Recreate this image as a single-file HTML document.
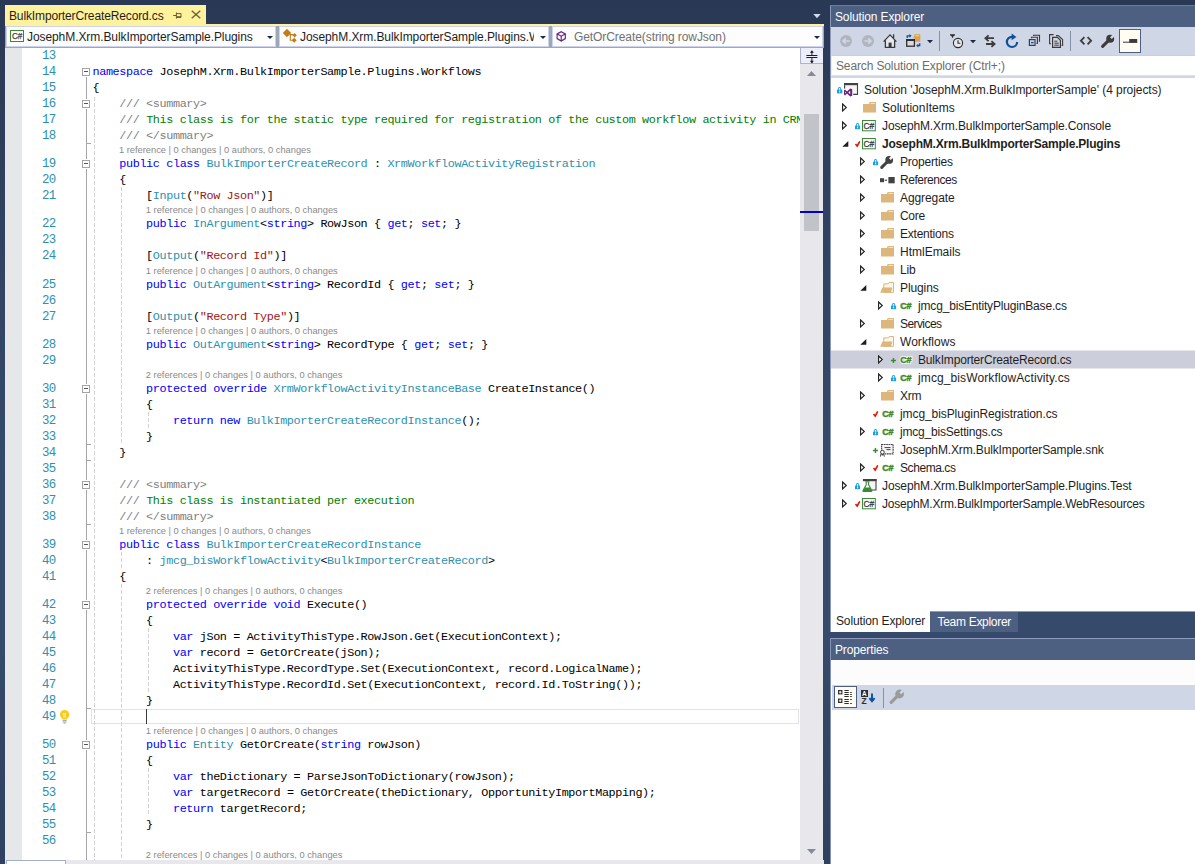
<!DOCTYPE html>
<html lang="en">
<head>
<meta charset="utf-8">
<title>BulkImporterCreateRecord.cs</title>
<style>
*{box-sizing:border-box;margin:0;padding:0}
html,body{width:1195px;height:864px;overflow:hidden}
body{background:linear-gradient(to bottom,#293955 0px,#2d3d5a 102px,#324565 302px,#364a6b 502px,#364a6c 640px,#344767 702px,#2f4060 864px);position:relative;font-family:"Liberation Sans",sans-serif;font-size:12px;color:#1e1e1e;letter-spacing:-0.13px}
.abs{position:absolute}
/* ---- document tab ---- */
#tab{position:absolute;left:5px;top:5px;width:201px;height:21px;background:#fff29d}
#tab .t{position:absolute;left:4px;top:4px;line-height:14px;color:#1e1e1e;white-space:nowrap}
#tabline{position:absolute;left:5px;top:24px;width:819px;height:2px;background:#fff29d}
#tabdd{position:absolute;left:813px;top:14px}
/* ---- nav bar ---- */
#nav{position:absolute;left:5px;top:26px;width:819px;height:22px;background:#9ba7bb}
.cb{position:absolute;top:0;height:21px;background:#fdfdfd;border:1px solid #ccd3ea;white-space:nowrap;overflow:hidden}
.cb .t{position:absolute;top:3px;line-height:14px;letter-spacing:-0.08px}
.cb svg{position:absolute}
.cb .dd{position:absolute;right:2px;top:9px;width:0;height:0;border:3px solid transparent;border-top:3.2px solid #1b2a47;border-bottom:0}
#lb{position:absolute;left:5px;top:48px;width:1px;height:812px;background:#8e9bbc}
/* ---- editor ---- */
#ed{position:absolute;left:5px;top:48px;width:795px;height:812px;background:#fff;overflow:hidden}
#mg{position:absolute;left:0;top:0;width:17px;height:812px;background:#e6e7e8}
.ln,.cd{position:absolute;font-family:"Liberation Mono",monospace;font-size:11.8px;letter-spacing:-0.377px;line-height:16px;height:16px;white-space:pre;margin-top:1px}
.ln{left:19.5px;width:31px;text-align:right;color:#2b91af;font-size:12.4px;letter-spacing:-0.74px}
.cd{left:87.5px;color:#000}
.k{color:#0000ff}.ty{color:#2b91af}.s{color:#a31515}.c{color:#008000}.g{color:#808080}.p{color:#000}
.cl{position:absolute;font-size:9.3px;line-height:12px;height:12px;margin-top:1px;color:#8a8a8a;white-space:pre;letter-spacing:0}
.ob{position:absolute;left:77px;width:8px;height:8px;border:1px solid #a5a5a5;background:#fff;z-index:2}
.ob i{position:absolute;left:1px;top:2px;width:4px;height:1px;background:#555}
.vl{position:absolute;width:1px;background:#a5a5a5}
.tk{position:absolute;left:81px;width:5px;height:1px;background:#a5a5a5}
.ig{position:absolute;width:1px;background:repeating-linear-gradient(to bottom,#d2d2d2 0,#d2d2d2 4px,transparent 4px,transparent 6px)}
#curline{position:absolute;left:86px;top:661px;width:708px;height:15px;border:1px solid #e2e2ee}
#caret{position:absolute;left:140.5px;top:661px;width:1.5px;height:14.5px;background:#3a3a3a}
/* ---- v scrollbar ---- */
#vs{position:absolute;left:800px;top:48px;width:23.2px;height:812px;background:#e8e8ec}
#split{position:absolute;left:0;top:0;width:23.2px;height:16px;background:#eceffb;border:1px solid #aab4cc;border-top:0;border-right:0}
#thumb{position:absolute;left:4px;top:66px;width:15px;height:117px;background:#c2c3c9}
#mark{position:absolute;left:0;top:163px;width:23.2px;height:2px;background:#0000cd}
#hs{position:absolute;left:5px;top:860px;width:819px;height:5px;background:#e8e8ec}
#zoom{position:absolute;left:1px;top:0;width:60px;height:4px;background:#fff;border:1px solid #a3aecb;border-bottom:0}
/* ---- right panels ---- */
#sebd{position:absolute;left:830px;top:5px;width:1px;height:627px;background:#8b98b9}
#prbd{position:absolute;left:830px;top:638px;width:1px;height:226px;background:#8492b4}
#setop{position:absolute;left:830px;top:5px;width:365px;height:1px;background:#6b7ca1}
#se .ttl{border-top:0}
#se .ttl span{top:3px}
#se{position:absolute;left:831px;top:6px;width:364px;height:606px;background:#fff}
.ttl{position:absolute;left:0;top:0;width:364px;height:21px;background:#4d6082;color:#fff;border-top:1px solid #8e9bbc}
.ttl span{position:absolute;left:4px;top:2px;line-height:16px;white-space:nowrap}
#tb{position:absolute;left:0;top:21px;width:364px;height:29px;background:#cfd6e5}
#tb svg,#ptb svg{position:absolute;left:0;top:0}
#srch{position:absolute;left:0;top:49px;width:364px;height:21px;background:#fff;border:1px solid #dde2ee;border-top-color:#c9cfdf;border-left-color:#e9ecf4;border-right:0}
#srch span{position:absolute;left:4px;top:2px;line-height:16px;color:#6d6d6d;white-space:nowrap}
#gap{position:absolute;left:0;top:70px;width:364px;height:2px;background:#cfd6e5}
#tree{position:absolute;left:0;top:72px;width:364px;height:533px;background:#fff}
.row{position:absolute;left:0;width:364px;height:18px}
.row .sel{position:absolute;left:0;top:0;width:364px;height:19px;background:linear-gradient(to bottom,#e5e6ed 0,#e5e6ed 1px,#cccedb 1px,#cccedb 18px,#e5e6ed 18px)}
.row svg{position:absolute;overflow:visible}
.row .tx{position:absolute;top:2px;line-height:16px;white-space:nowrap}
.row .b{font-weight:bold}
#tabs{position:absolute;left:831px;top:611px;width:364px;height:21px}
#tabs .ln1{position:absolute;left:99px;top:0;width:265px;height:1px;background:#8e9bbc}
#tabs .a{position:absolute;left:0;top:0;width:99px;height:21px;background:#fff;color:#1e1e1e}
#tabs .i{position:absolute;left:99px;top:1px;width:88px;height:20px;background:#4d6082;color:#fff}
#tabs span{position:absolute;left:5px;top:2px;line-height:16px;white-space:nowrap}
#pr{position:absolute;left:831px;top:638px;width:364px;height:226px;background:#fff}
#pr .w{position:absolute;left:0;top:22px;width:364px;height:25px;background:#fcfcfc}
#pr .ttl{height:22px}
#pr .ttl span{top:3px}
#tabs .i span{left:7.5px;letter-spacing:-0.3px}
#ptb{position:absolute;left:1px;top:47px;width:363px;height:25px;background:#cfd6e5}
</style>
</head>
<body>

<!-- document tab well -->
<div id="tab"><span class="t">BulkImporterCreateRecord.cs</span>
<svg class="abs" style="left:168px;top:7px" width="9" height="8" viewBox="0 0 9 8"><path d="M0.2 3.5 H3.2 M3.4 0.4 V6.6 M3.4 1.6 H8 V5.4 H3.4" fill="none" stroke="#6b5c33" stroke-width="1"/><path d="M3.4 4.9 H8" stroke="#6b5c33" stroke-width="1.4"/></svg>
<svg class="abs" style="left:186px;top:5px" width="10" height="9" viewBox="0 0 10 9"><path d="M0.7 0.7 L9.3 8.3 M9.3 0.7 L0.7 8.3" stroke="#6b5c33" stroke-width="1.25" fill="none"/></svg>
</div>
<div id="tabline"></div>
<svg id="tabdd" width="8" height="5" viewBox="0 0 8 5"><path d="M0.3 0 H7.7 L4 4.2 Z" fill="#d3dbec"/></svg>

<!-- navigation bar -->
<div id="nav">
  <div class="cb" style="left:1px;width:270px">
    <svg style="left:3px;top:3px" width="15" height="13" viewBox="0 0 15 13"><rect x="0.5" y="0.5" width="13" height="11" fill="#fff" stroke="#388a34"/><text x="1.9" y="9" font-family="Liberation Sans, sans-serif" font-size="8.2" fill="#424242" stroke="#424242" stroke-width="0.25" letter-spacing="-0.1">C#</text></svg>
    <span class="t" style="left:20px">JosephM.Xrm.BulkImporterSample.Plugins</span><span class="dd"></span>
  </div>
  <div class="cb" style="left:274px;width:270px">
    <svg style="left:2px;top:1px" width="15" height="15" viewBox="282 28 15 15"><path d="M287 28.8 L291.2 33 L287 37.2 L282.8 33 Z M294.6 33 L296.8 35.2 L294.6 37.4 L292.4 35.2 Z M294.2 37.8 L296.7 40.3 L294.2 42.8 L291.7 40.3 Z" fill="#c27d1a"/><path d="M289.5 34.6 H293 M290.3 34.6 V40.3 H292.5" fill="none" stroke="#c27d1a" stroke-width="1.1"/></svg>
    <span class="t" style="left:20px">JosephM.Xrm.BulkImporterSample.Plugins.Workflows</span>
    <span class="abs" style="right:0;top:0;width:14px;height:19px;background:#fdfdfd"></span><span class="dd"></span>
  </div>
  <div class="cb" style="left:547px;width:271px">
    <svg style="left:3px;top:4px" width="11" height="11" viewBox="0 0 11 11"><path d="M5.2 0.7 L9.3 2.9 V7.6 L5.2 10 L1.1 7.6 V2.9 Z M1.3 3 L5.2 5.2 L9.1 3 M5.2 5.2 V10" fill="none" stroke="#68217a" stroke-width="1.15"/></svg>
    <span class="t" style="left:21px;color:#717171">GetOrCreate(string rowJson)</span><span class="dd"></span>
  </div>
</div>
<div id="lb"></div>

<!-- code editor -->
<div id="ed">
<div id="mg"></div>
<div id="curline"></div>
<div class="ob" style="top:20px"><i></i></div>
<div class="ob" style="top:52px"><i></i></div>
<div class="ob" style="top:112px"><i></i></div>
<div class="ob" style="top:337px"><i></i></div>
<div class="ob" style="top:433px"><i></i></div>
<div class="ob" style="top:493px"><i></i></div>
<div class="ob" style="top:553px"><i></i></div>
<div class="ob" style="top:693px"><i></i></div>
<div class="vl" style="left:81px;top:29px;height:22px"></div>
<div class="vl" style="left:81px;top:61px;height:50px"></div>
<div class="tk" style="top:95px"></div>
<div class="vl" style="left:81px;top:121px;height:215px"></div>
<div class="vl" style="left:81px;top:346px;height:86px"></div>
<div class="tk" style="top:396px"></div>
<div class="tk" style="top:412px"></div>
<div class="vl" style="left:81px;top:442px;height:50px"></div>
<div class="tk" style="top:476px"></div>
<div class="vl" style="left:81px;top:502px;height:50px"></div>
<div class="vl" style="left:81px;top:562px;height:130px"></div>
<div class="tk" style="top:660px"></div>
<div class="vl" style="left:81px;top:702px;height:110px"></div>
<div class="tk" style="top:784px"></div>
<div class="ig" style="left:89px;top:49px;height:763px"></div>
<div class="ig" style="left:116px;top:139px;height:257px"></div>
<div class="ig" style="left:116px;top:504px;height:16px"></div>
<div class="ig" style="left:116px;top:536px;height:276px"></div>
<div class="ig" style="left:143px;top:364px;height:16px"></div>
<div class="ig" style="left:143px;top:580px;height:64px"></div>
<div class="ig" style="left:143px;top:720px;height:48px"></div>
<div class="ln" style="top:-1px">13</div>
<div class="ln" style="top:15px">14</div>
<div class="cd" style="top:15px"><span class="k">namespace</span><span class="p"> JosephM.Xrm.BulkImporterSample.Plugins.Workflows</span></div>
<div class="ln" style="top:31px">15</div>
<div class="cd" style="top:31px"><span class="p">{</span></div>
<div class="ln" style="top:47px">16</div>
<div class="cd" style="top:47px"><span class="g">    /// &lt;summary&gt;</span></div>
<div class="ln" style="top:63px">17</div>
<div class="cd" style="top:63px"><span class="g">    /// </span><span class="c">This class is for the static type required for registration of the custom workflow activity in CRM</span></div>
<div class="ln" style="top:79px">18</div>
<div class="cd" style="top:79px"><span class="g">    /// &lt;/summary&gt;</span></div>
<div class="cl" style="top:95px;left:114.0px">1 reference | 0 changes | 0 authors, 0 changes</div>
<div class="ln" style="top:107px">19</div>
<div class="cd" style="top:107px"><span class="k">    public class </span><span class="ty">BulkImporterCreateRecord</span><span class="p"> : </span><span class="ty">XrmWorkflowActivityRegistration</span></div>
<div class="ln" style="top:123px">20</div>
<div class="cd" style="top:123px"><span class="p">    {</span></div>
<div class="ln" style="top:139px">21</div>
<div class="cd" style="top:139px"><span class="p">        [</span><span class="ty">Input</span><span class="p">(</span><span class="s">&quot;Row Json&quot;</span><span class="p">)]</span></div>
<div class="cl" style="top:155px;left:140.8px">1 reference | 0 changes | 0 authors, 0 changes</div>
<div class="ln" style="top:167px">22</div>
<div class="cd" style="top:167px"><span class="k">        public </span><span class="ty">InArgument</span><span class="p">&lt;</span><span class="k">string</span><span class="p">&gt; RowJson { </span><span class="k">get</span><span class="p">; </span><span class="k">set</span><span class="p">; }</span></div>
<div class="ln" style="top:183px">23</div>
<div class="ln" style="top:199px">24</div>
<div class="cd" style="top:199px"><span class="p">        [</span><span class="ty">Output</span><span class="p">(</span><span class="s">&quot;Record Id&quot;</span><span class="p">)]</span></div>
<div class="cl" style="top:216px;left:140.8px">1 reference | 0 changes | 0 authors, 0 changes</div>
<div class="ln" style="top:228px">25</div>
<div class="cd" style="top:228px"><span class="k">        public </span><span class="ty">OutArgument</span><span class="p">&lt;</span><span class="k">string</span><span class="p">&gt; RecordId { </span><span class="k">get</span><span class="p">; </span><span class="k">set</span><span class="p">; }</span></div>
<div class="ln" style="top:244px">26</div>
<div class="ln" style="top:260px">27</div>
<div class="cd" style="top:260px"><span class="p">        [</span><span class="ty">Output</span><span class="p">(</span><span class="s">&quot;Record Type&quot;</span><span class="p">)]</span></div>
<div class="cl" style="top:276px;left:140.8px">1 reference | 0 changes | 0 authors, 0 changes</div>
<div class="ln" style="top:288px">28</div>
<div class="cd" style="top:288px"><span class="k">        public </span><span class="ty">OutArgument</span><span class="p">&lt;</span><span class="k">string</span><span class="p">&gt; RecordType { </span><span class="k">get</span><span class="p">; </span><span class="k">set</span><span class="p">; }</span></div>
<div class="ln" style="top:304px">29</div>
<div class="cl" style="top:320px;left:140.8px">2 references | 0 changes | 0 authors, 0 changes</div>
<div class="ln" style="top:332px">30</div>
<div class="cd" style="top:332px"><span class="k">        protected override </span><span class="ty">XrmWorkflowActivityInstanceBase</span><span class="p"> CreateInstance()</span></div>
<div class="ln" style="top:348px">31</div>
<div class="cd" style="top:348px"><span class="p">        {</span></div>
<div class="ln" style="top:364px">32</div>
<div class="cd" style="top:364px"><span class="k">            return new </span><span class="ty">BulkImporterCreateRecordInstance</span><span class="p">();</span></div>
<div class="ln" style="top:380px">33</div>
<div class="cd" style="top:380px"><span class="p">        }</span></div>
<div class="ln" style="top:396px">34</div>
<div class="cd" style="top:396px"><span class="p">    }</span></div>
<div class="ln" style="top:412px">35</div>
<div class="ln" style="top:428px">36</div>
<div class="cd" style="top:428px"><span class="g">    /// &lt;summary&gt;</span></div>
<div class="ln" style="top:444px">37</div>
<div class="cd" style="top:444px"><span class="g">    /// </span><span class="c">This class is instantiated per execution</span></div>
<div class="ln" style="top:460px">38</div>
<div class="cd" style="top:460px"><span class="g">    /// &lt;/summary&gt;</span></div>
<div class="cl" style="top:476px;left:114.0px">1 reference | 0 changes | 0 authors, 0 changes</div>
<div class="ln" style="top:488px">39</div>
<div class="cd" style="top:488px"><span class="k">    public class </span><span class="ty">BulkImporterCreateRecordInstance</span></div>
<div class="ln" style="top:504px">40</div>
<div class="cd" style="top:504px"><span class="p">        : </span><span class="ty">jmcg_bisWorkflowActivity</span><span class="p">&lt;</span><span class="ty">BulkImporterCreateRecord</span><span class="p">&gt;</span></div>
<div class="ln" style="top:520px">41</div>
<div class="cd" style="top:520px"><span class="p">    {</span></div>
<div class="cl" style="top:536px;left:140.8px">2 references | 0 changes | 0 authors, 0 changes</div>
<div class="ln" style="top:548px">42</div>
<div class="cd" style="top:548px"><span class="k">        protected override void</span><span class="p"> Execute()</span></div>
<div class="ln" style="top:564px">43</div>
<div class="cd" style="top:564px"><span class="p">        {</span></div>
<div class="ln" style="top:580px">44</div>
<div class="cd" style="top:580px"><span class="k">            var</span><span class="p"> jSon = ActivityThisType.RowJson.Get(ExecutionContext);</span></div>
<div class="ln" style="top:596px">45</div>
<div class="cd" style="top:596px"><span class="k">            var</span><span class="p"> record = GetOrCreate(jSon);</span></div>
<div class="ln" style="top:612px">46</div>
<div class="cd" style="top:612px"><span class="p">            ActivityThisType.RecordType.Set(ExecutionContext, record.LogicalName);</span></div>
<div class="ln" style="top:628px">47</div>
<div class="cd" style="top:628px"><span class="p">            ActivityThisType.RecordId.Set(ExecutionContext, record.Id.ToString());</span></div>
<div class="ln" style="top:644px">48</div>
<div class="cd" style="top:644px"><span class="p">        }</span></div>
<div class="ln" style="top:660px">49</div>
<div class="cl" style="top:676px;left:140.8px">1 reference | 0 changes | 0 authors, 0 changes</div>
<div class="ln" style="top:688px">50</div>
<div class="cd" style="top:688px"><span class="k">        public </span><span class="ty">Entity</span><span class="p"> GetOrCreate(</span><span class="k">string</span><span class="p"> rowJson)</span></div>
<div class="ln" style="top:704px">51</div>
<div class="cd" style="top:704px"><span class="p">        {</span></div>
<div class="ln" style="top:720px">52</div>
<div class="cd" style="top:720px"><span class="k">            var</span><span class="p"> theDictionary = ParseJsonToDictionary(rowJson);</span></div>
<div class="ln" style="top:736px">53</div>
<div class="cd" style="top:736px"><span class="k">            var</span><span class="p"> targetRecord = GetOrCreate(theDictionary, OpportunityImportMapping);</span></div>
<div class="ln" style="top:752px">54</div>
<div class="cd" style="top:752px"><span class="k">            return</span><span class="p"> targetRecord;</span></div>
<div class="ln" style="top:768px">55</div>
<div class="cd" style="top:768px"><span class="p">        }</span></div>
<div class="ln" style="top:784px">56</div>
<div class="cl" style="top:800px;left:140.8px">2 references | 0 changes | 0 authors, 0 changes</div>
<div id="caret"></div>
<svg class="abs" style="left:55px;top:662px" width="10" height="14" viewBox="0 0 10 14"><path d="M4.6 0 a4.5 4.5 0 0 1 2.6 8.2 L6.8 9.4 H2.4 L2 8.2 A4.5 4.5 0 0 1 4.6 0 Z" fill="#fccb1a"/><path d="M3 3.6 H6.2 M3.9 3.6 V7.6 M5.3 3.6 V7.6" stroke="#fff" stroke-width="0.8" fill="none"/><path d="M2.6 10.6 H6.6 M2.6 12 H6.6 M3.8 13.2 H5.4" stroke="#9a9a9a" stroke-width="0.9"/></svg>
</div>

<!-- vertical scrollbar -->
<div id="vs">
  <div id="split"><svg class="abs" style="left:5px;top:2px" width="12" height="14" viewBox="0 0 12 14"><path d="M0.4 5.5 H11.4 M0.4 7.5 H11.4 M5.9 1 V5 M5.9 8 V12.6" stroke="#1e1e1e" stroke-width="1" fill="none"/><path d="M3.9 2.8 L5.9 0.2 L7.9 2.8 Z M3.9 10.8 L5.9 13.4 L7.9 10.8 Z" fill="#1e1e1e"/></svg></div>
  <svg class="abs" style="left:7px;top:23px" width="9" height="5" viewBox="0 0 9 5"><path d="M4.5 0 L9 5 H0 Z" fill="#868999"/></svg>
  <div id="thumb"></div>
  <div id="mark"></div>
  <svg class="abs" style="left:7px;top:801px" width="9" height="5" viewBox="0 0 9 5"><path d="M4.5 5 L9 0 H0 Z" fill="#868999"/></svg>
</div>
<div id="hs"><div id="zoom"></div></div>

<!-- Solution Explorer -->
<div id="sebd"></div><div id="prbd"></div>
<div id="setop"></div>
<div id="se">
  <div class="ttl"><span>Solution Explorer</span></div>
  <div id="tb">
<svg width="364" height="29" viewBox="831 27 364 29">
<!-- back / forward (disabled) -->
<circle cx="846" cy="41" r="6" fill="#b1b5c0"/>
<path d="M849.6 41 H843.4 M845.8 38.3 L843 41 L845.8 43.7" fill="none" stroke="#cfd6e5" stroke-width="1.7"/>
<circle cx="868" cy="41" r="6" fill="#b1b5c0"/>
<path d="M864.4 41 H870.6 M868.2 38.3 L871 41 L868.2 43.7" fill="none" stroke="#cfd6e5" stroke-width="1.7"/>
<!-- home -->
<path d="M885.4 40.6 V47.4 H894.6 V40.6 L890 35.6 Z" fill="#e6e8f0"/>
<path d="M883.6 41.6 L890 34.9 L896.4 41.6 M885.4 40.4 V47.4 H894.6 V40.4 M893.6 34.2 V38" fill="none" stroke="#3b3b3b" stroke-width="1.3"/>
<rect x="888.6" y="42.6" width="3" height="4.8" fill="#3b3b3b"/>
<!-- sync with active document -->
<path d="M911.4 37.8 H913.6 L914.6 34.3 H920.3 V41.8 H914.8 V38.5 Z" fill="#dba24a"/>
<rect x="915.6" y="35.3" width="3.4" height="1" fill="#f0d9b0"/>
<rect x="906.7" y="39.7" width="7.7" height="6.5" fill="#d8dae6" stroke="#2d2d2d" stroke-width="1.3"/>
<rect x="906.1" y="39" width="8.9" height="2" fill="#2d2d2d"/>
<path d="M907.2 38 V35.8 H910.2" fill="none" stroke="#0e4f9e" stroke-width="1.3"/><path d="M909.4 33.9 L911.6 35.8 L909.4 37.7 Z" fill="#0e4f9e"/>
<path d="M919.7 43.2 V45.6 H917.6" fill="none" stroke="#0e4f9e" stroke-width="1.3"/><path d="M918.4 43.7 L916.2 45.6 L918.4 47.5 Z" fill="#0e4f9e"/>
<path d="M927 40 H933 L930 43.3 Z" fill="#1e2a44"/>
<rect x="939" y="31" width="1" height="20" fill="#8591a7"/>
<!-- pending changes filter -->
<path d="M950 34.2 H955 V35.2 L953.1 36.4 V37.8 H951.9 V36.4 L950 35.2 Z" fill="#2d2d2d"/>
<circle cx="958" cy="43" r="4.6" fill="#e6e8f0" stroke="#2d2d2d" stroke-width="1.1"/>
<path d="M958 40.3 V43.3 H960.4" fill="none" stroke="#2d2d2d" stroke-width="1.1"/>
<path d="M970 40 H976 L973 43.3 Z" fill="#1e2a44"/>
<!-- sync arrows -->
<path d="M994 38.2 H986 M988.6 35.3 L985.4 38.2 L988.6 41.1 M986 44 H994 M991.4 41.1 L994.6 44 L991.4 46.9" fill="none" stroke="#3b3b3b" stroke-width="1.8"/>
<!-- refresh -->
<path d="M1017.1 41.9 A5.1 5.1 0 1 1 1012 36.8" fill="none" stroke="#0e4f9e" stroke-width="2.2"/>
<path d="M1011.6 33.6 L1016.4 36.9 L1011.6 40.2 Z" fill="#0e4f9e"/>
<!-- collapse all -->
<rect x="1029.4" y="39.6" width="5.6" height="5.8" fill="none" stroke="#3b3b3b" stroke-width="1.2"/>
<path d="M1031 42.6 H1033.6" stroke="#0e4f9e" stroke-width="1.4"/>
<path d="M1031.5 38.2 V37.3 H1037.4 V43.4 H1036.5 M1033.6 35.9 V35.2 H1039.5 V41.2 H1038.8" fill="none" stroke="#3b3b3b" stroke-width="1.1"/>
<!-- show all files -->
<path d="M1053.6 34.6 H1049.6 V43.6 H1050.8 M1056 35.6 H1058.2 L1062.6 39.6 V45.4 H1061.6" fill="none" stroke="#3b3b3b" stroke-width="1.1"/>
<path d="M1052.6 37.4 H1057.4 L1060.4 40.2 V47.4 H1052.6 Z" fill="#cfd6e5" stroke="#3b3b3b" stroke-width="1.2"/>
<path d="M1054.4 41.2 H1057.4 M1054.4 43.2 H1058.8 M1054.4 45.2 H1058.8" stroke="#3b3b3b" stroke-width="1"/>
<rect x="1070" y="31" width="1" height="20" fill="#8591a7"/>
<!-- view code -->
<path d="M1084.4 37.1 L1080.9 40.7 L1084.4 44.3 M1087.6 37.1 L1091.1 40.7 L1087.6 44.3" fill="none" stroke="#3b3b3b" stroke-width="1.8"/>
<!-- properties wrench -->
<path d="M1102.6 46.4 L1108.4 40.6" stroke="#3b3b3b" stroke-width="3" stroke-linecap="round"/>
<circle cx="1110.2" cy="38.8" r="4" fill="#3b3b3b"/>
<path d="M1110.9 38.1 L1115.2 33.8" stroke="#cfd6e5" stroke-width="2.5"/>
<!-- preview selected items (pressed) -->
<rect x="1119.5" y="29.5" width="21" height="23" fill="#fffcf4" stroke="#4d6082"/>
<rect x="1123" y="41.7" width="14.2" height="1" fill="#3b3b3b"/>
<rect x="1129.2" y="39" width="8" height="3.7" fill="#3b3b3b"/>
</svg>

  </div>
  <div id="srch"><span>Search Solution Explorer (Ctrl+;)</span></div>
  <div id="gap"></div>
  <div id="tree">
<div class="row" style="top:2px"><svg style="left:5.9px;top:7.2px" width="6" height="7" viewBox="0 0 6 7"><path d="M0.85 2.9 V1.65 A1.7 1.65 0 0 1 4.25 1.65 V2.9 H3.3 V1.7 A0.75 0.75 0 0 0 1.8 1.7 V2.9 Z" fill="#1ba1e2"/><rect x="0" y="2.7" width="5.3" height="3.7" fill="#1ba1e2"/><rect x="2" y="3.7" width="1.2" height="1.6" fill="#fff"/></svg><svg style="left:13.0px;top:2.9px" width="15" height="14" viewBox="0 0 15 14"><path d="M0.6 0.6 H13.5 V11.4 H9.2" fill="#f5f5f5" stroke="#424242" stroke-width="1.1"/><rect x="0" y="0" width="14" height="2.2" fill="#424242"/><rect x="0" y="2.2" width="1.2" height="3.4" fill="#424242"/><path d="M0 7.4 L1 6.6 L3 8.6 L6.2 5.4 L8.2 6.2 V12.8 L6.2 13.6 L3 10.4 L1 12.4 L0 11.6 Z M6.2 7.8 L4.4 9.5 L6.2 11.2 Z M1 8.6 V10.4 L2 9.5 Z" fill="#68217a" fill-rule="evenodd"/></svg><span class="tx" style="left:33px;letter-spacing:-0.059px">Solution &#x27;JosephM.Xrm.BulkImporterSample&#x27; (4 projects)</span></div>
<div class="row" style="top:20px"><svg style="left:11.0px;top:5.3px" width="6" height="9" viewBox="0 0 6 9"><path d="M0.6 1.0 L4.3 4.5 L0.6 8.0 Z" fill="#fff" stroke="#1e1e1e" stroke-width="1.1" stroke-linejoin="miter"/></svg><svg style="left:32.0px;top:4.1px" width="13" height="11" viewBox="0 0 13 11"><path d="M0 1.9 H5.9 L6.7 0 H13 V10.6 H0 Z" fill="#dcb67a"/><rect x="7.4" y="0.9" width="4.8" height="0.9" fill="#f6ecd8"/></svg><span class="tx" style="left:51px;letter-spacing:0.007px">SolutionItems</span></div>
<div class="row" style="top:38px"><svg style="left:11.0px;top:5.3px" width="6" height="9" viewBox="0 0 6 9"><path d="M0.6 1.0 L4.3 4.5 L0.6 8.0 Z" fill="#fff" stroke="#1e1e1e" stroke-width="1.1" stroke-linejoin="miter"/></svg><svg style="left:23.9px;top:7.3px" width="6" height="7" viewBox="0 0 6 7"><path d="M0.85 2.9 V1.65 A1.7 1.65 0 0 1 4.25 1.65 V2.9 H3.3 V1.7 A0.75 0.75 0 0 0 1.8 1.7 V2.9 Z" fill="#1ba1e2"/><rect x="0" y="2.7" width="5.1" height="3.5" fill="#1ba1e2"/><rect x="2" y="3.6" width="1.1" height="1.6" fill="#fff"/></svg><svg style="left:31.1px;top:4.2px" width="14" height="12" viewBox="0 0 14 12"><rect x="0.5" y="0.5" width="12.8" height="10.3" fill="#fff" stroke="#388a34" stroke-width="1"/><text x="1.6" y="8.8" font-family="Liberation Sans, sans-serif" font-size="8.3" fill="#424242" stroke="#424242" stroke-width="0.3">C#</text></svg><span class="tx" style="left:51px;letter-spacing:-0.117px">JosephM.Xrm.BulkImporterSample.Console</span></div>
<div class="row" style="top:56px"><svg style="left:11.0px;top:7.1px" width="7" height="6" viewBox="0 0 7 6"><path d="M6.3 0 V5.8 H0.3 Z" fill="#1e1e1e"/></svg><svg style="left:24.2px;top:7.1px" width="6" height="6" viewBox="0 0 6 6"><path d="M0.5 3 L2.2 5 L4.8 0.4" fill="none" stroke="#e51400" stroke-width="1.6"/></svg><svg style="left:31.1px;top:4.2px" width="14" height="12" viewBox="0 0 14 12"><rect x="0.5" y="0.5" width="12.8" height="10.3" fill="#fff" stroke="#388a34" stroke-width="1"/><text x="1.6" y="8.8" font-family="Liberation Sans, sans-serif" font-size="8.3" fill="#424242" stroke="#424242" stroke-width="0.3">C#</text></svg><span class="tx b" style="left:51px;letter-spacing:-0.207px">JosephM.Xrm.BulkImporterSample.Plugins</span></div>
<div class="row" style="top:74px"><svg style="left:29.0px;top:5.3px" width="6" height="9" viewBox="0 0 6 9"><path d="M0.6 1.0 L4.3 4.5 L0.6 8.0 Z" fill="#fff" stroke="#1e1e1e" stroke-width="1.1" stroke-linejoin="miter"/></svg><svg style="left:41.9px;top:7.3px" width="6" height="7" viewBox="0 0 6 7"><path d="M0.85 2.9 V1.65 A1.7 1.65 0 0 1 4.25 1.65 V2.9 H3.3 V1.7 A0.75 0.75 0 0 0 1.8 1.7 V2.9 Z" fill="#1ba1e2"/><rect x="0" y="2.7" width="5.1" height="3.5" fill="#1ba1e2"/><rect x="2" y="3.6" width="1.1" height="1.6" fill="#fff"/></svg><svg style="left:48.9px;top:3.8px" width="14" height="14" viewBox="0 0 14 14"><path d="M1.7 11.4 L7.4 5.7" stroke="#424242" stroke-width="3" stroke-linecap="round"/><circle cx="9.2" cy="3.9" r="3.9" fill="#424242"/><path d="M9.9 3.2 L14 -0.9" stroke="#fff" stroke-width="2.4"/></svg><span class="tx" style="left:69px;letter-spacing:-0.200px">Properties</span></div>
<div class="row" style="top:92px"><svg style="left:29.0px;top:5.3px" width="6" height="9" viewBox="0 0 6 9"><path d="M0.6 1.0 L4.3 4.5 L0.6 8.0 Z" fill="#fff" stroke="#1e1e1e" stroke-width="1.1" stroke-linejoin="miter"/></svg><svg style="left:48.6px;top:6.6px" width="15" height="7" viewBox="0 0 15 7"><rect x="0" y="1.2" width="4" height="4" fill="#424242"/><rect x="4.6" y="2.7" width="2.4" height="1.1" fill="#424242"/><rect x="8.4" y="0" width="6.3" height="6.3" fill="#424242"/></svg><span class="tx" style="left:69px;letter-spacing:-0.458px">References</span></div>
<div class="row" style="top:110px"><svg style="left:29.0px;top:5.3px" width="6" height="9" viewBox="0 0 6 9"><path d="M0.6 1.0 L4.3 4.5 L0.6 8.0 Z" fill="#fff" stroke="#1e1e1e" stroke-width="1.1" stroke-linejoin="miter"/></svg><svg style="left:50.0px;top:4.1px" width="13" height="11" viewBox="0 0 13 11"><path d="M0 1.9 H5.9 L6.7 0 H13 V10.6 H0 Z" fill="#dcb67a"/><rect x="7.4" y="0.9" width="4.8" height="0.9" fill="#f6ecd8"/></svg><span class="tx" style="left:69px;letter-spacing:-0.088px">Aggregate</span></div>
<div class="row" style="top:128px"><svg style="left:29.0px;top:5.3px" width="6" height="9" viewBox="0 0 6 9"><path d="M0.6 1.0 L4.3 4.5 L0.6 8.0 Z" fill="#fff" stroke="#1e1e1e" stroke-width="1.1" stroke-linejoin="miter"/></svg><svg style="left:50.0px;top:4.1px" width="13" height="11" viewBox="0 0 13 11"><path d="M0 1.9 H5.9 L6.7 0 H13 V10.6 H0 Z" fill="#dcb67a"/><rect x="7.4" y="0.9" width="4.8" height="0.9" fill="#f6ecd8"/></svg><span class="tx" style="left:69px;letter-spacing:-0.304px">Core</span></div>
<div class="row" style="top:146px"><svg style="left:29.0px;top:5.3px" width="6" height="9" viewBox="0 0 6 9"><path d="M0.6 1.0 L4.3 4.5 L0.6 8.0 Z" fill="#fff" stroke="#1e1e1e" stroke-width="1.1" stroke-linejoin="miter"/></svg><svg style="left:50.0px;top:4.1px" width="13" height="11" viewBox="0 0 13 11"><path d="M0 1.9 H5.9 L6.7 0 H13 V10.6 H0 Z" fill="#dcb67a"/><rect x="7.4" y="0.9" width="4.8" height="0.9" fill="#f6ecd8"/></svg><span class="tx" style="left:69px;letter-spacing:-0.235px">Extentions</span></div>
<div class="row" style="top:164px"><svg style="left:29.0px;top:5.3px" width="6" height="9" viewBox="0 0 6 9"><path d="M0.6 1.0 L4.3 4.5 L0.6 8.0 Z" fill="#fff" stroke="#1e1e1e" stroke-width="1.1" stroke-linejoin="miter"/></svg><svg style="left:50.0px;top:4.1px" width="13" height="11" viewBox="0 0 13 11"><path d="M0 1.9 H5.9 L6.7 0 H13 V10.6 H0 Z" fill="#dcb67a"/><rect x="7.4" y="0.9" width="4.8" height="0.9" fill="#f6ecd8"/></svg><span class="tx" style="left:69px;letter-spacing:-0.007px">HtmlEmails</span></div>
<div class="row" style="top:182px"><svg style="left:29.0px;top:5.3px" width="6" height="9" viewBox="0 0 6 9"><path d="M0.6 1.0 L4.3 4.5 L0.6 8.0 Z" fill="#fff" stroke="#1e1e1e" stroke-width="1.1" stroke-linejoin="miter"/></svg><svg style="left:50.0px;top:4.1px" width="13" height="11" viewBox="0 0 13 11"><path d="M0 1.9 H5.9 L6.7 0 H13 V10.6 H0 Z" fill="#dcb67a"/><rect x="7.4" y="0.9" width="4.8" height="0.9" fill="#f6ecd8"/></svg><span class="tx" style="left:69px;letter-spacing:-0.205px">Lib</span></div>
<div class="row" style="top:200px"><svg style="left:29.0px;top:7.1px" width="7" height="6" viewBox="0 0 7 6"><path d="M6.3 0 V5.8 H0.3 Z" fill="#1e1e1e"/></svg><svg style="left:49.1px;top:4.0px" width="14" height="11" viewBox="0 0 14 11"><path d="M3.8 1.9 H8.4 L9.2 0.5 H13.5 V10.3 H3.8 Z" fill="#fbf6ea" stroke="#dcb67a" stroke-width="1"/><path d="M0.2 10.8 L2.4 5.6 H12.4 L10.9 10.8 Z" fill="#dcb67a"/></svg><span class="tx" style="left:69px;letter-spacing:-0.108px">Plugins</span></div>
<div class="row" style="top:218px"><svg style="left:47.0px;top:5.3px" width="6" height="9" viewBox="0 0 6 9"><path d="M0.6 1.0 L4.3 4.5 L0.6 8.0 Z" fill="#fff" stroke="#1e1e1e" stroke-width="1.1" stroke-linejoin="miter"/></svg><svg style="left:59.9px;top:7.3px" width="6" height="7" viewBox="0 0 6 7"><path d="M0.85 2.9 V1.65 A1.7 1.65 0 0 1 4.25 1.65 V2.9 H3.3 V1.7 A0.75 0.75 0 0 0 1.8 1.7 V2.9 Z" fill="#1ba1e2"/><rect x="0" y="2.7" width="5.1" height="3.5" fill="#1ba1e2"/><rect x="2" y="3.6" width="1.1" height="1.6" fill="#fff"/></svg><svg style="left:68.6px;top:5.8px" width="12" height="8" viewBox="0 0 12 8"><text x="0.2" y="6.9" font-family="Liberation Sans, sans-serif" font-size="9" font-weight="bold" fill="#388a34" stroke="#fff" stroke-width="2" letter-spacing="-0.2">C#</text><text x="0.2" y="6.9" font-family="Liberation Sans, sans-serif" font-size="9" font-weight="bold" fill="#388a34" stroke="#388a34" stroke-width="0.45" letter-spacing="-0.2">C#</text></svg><span class="tx" style="left:87px;letter-spacing:-0.174px">jmcg_bisEntityPluginBase.cs</span></div>
<div class="row" style="top:236px"><svg style="left:29.0px;top:5.3px" width="6" height="9" viewBox="0 0 6 9"><path d="M0.6 1.0 L4.3 4.5 L0.6 8.0 Z" fill="#fff" stroke="#1e1e1e" stroke-width="1.1" stroke-linejoin="miter"/></svg><svg style="left:50.0px;top:4.1px" width="13" height="11" viewBox="0 0 13 11"><path d="M0 1.9 H5.9 L6.7 0 H13 V10.6 H0 Z" fill="#dcb67a"/><rect x="7.4" y="0.9" width="4.8" height="0.9" fill="#f6ecd8"/></svg><span class="tx" style="left:69px;letter-spacing:-0.577px">Services</span></div>
<div class="row" style="top:254px"><svg style="left:29.0px;top:7.1px" width="7" height="6" viewBox="0 0 7 6"><path d="M6.3 0 V5.8 H0.3 Z" fill="#1e1e1e"/></svg><svg style="left:49.1px;top:4.0px" width="14" height="11" viewBox="0 0 14 11"><path d="M3.8 1.9 H8.4 L9.2 0.5 H13.5 V10.3 H3.8 Z" fill="#fbf6ea" stroke="#dcb67a" stroke-width="1"/><path d="M0.2 10.8 L2.4 5.6 H12.4 L10.9 10.8 Z" fill="#dcb67a"/></svg><span class="tx" style="left:69px;letter-spacing:0.042px">Workflows</span></div>
<div class="row" style="top:272px"><div class="sel"></div><svg style="left:47.0px;top:5.3px" width="6" height="9" viewBox="0 0 6 9"><path d="M0.6 1.0 L4.3 4.5 L0.6 8.0 Z" fill="#fff" stroke="#1e1e1e" stroke-width="1.1" stroke-linejoin="miter"/></svg><svg style="left:60.0px;top:7.8px" width="5" height="5" viewBox="0 0 5 5"><path d="M2.45 0 V4.9 M0 2.45 H4.9" fill="none" stroke="#388a34" stroke-width="1.4"/></svg><svg style="left:68.6px;top:5.8px" width="12" height="8" viewBox="0 0 12 8"><text x="0.2" y="6.9" font-family="Liberation Sans, sans-serif" font-size="9" font-weight="bold" fill="#388a34" stroke="#fff" stroke-width="2" letter-spacing="-0.2">C#</text><text x="0.2" y="6.9" font-family="Liberation Sans, sans-serif" font-size="9" font-weight="bold" fill="#388a34" stroke="#388a34" stroke-width="0.45" letter-spacing="-0.2">C#</text></svg><span class="tx" style="left:87px;letter-spacing:-0.173px">BulkImporterCreateRecord.cs</span></div>
<div class="row" style="top:290px"><svg style="left:47.0px;top:5.3px" width="6" height="9" viewBox="0 0 6 9"><path d="M0.6 1.0 L4.3 4.5 L0.6 8.0 Z" fill="#fff" stroke="#1e1e1e" stroke-width="1.1" stroke-linejoin="miter"/></svg><svg style="left:59.9px;top:7.3px" width="6" height="7" viewBox="0 0 6 7"><path d="M0.85 2.9 V1.65 A1.7 1.65 0 0 1 4.25 1.65 V2.9 H3.3 V1.7 A0.75 0.75 0 0 0 1.8 1.7 V2.9 Z" fill="#1ba1e2"/><rect x="0" y="2.7" width="5.1" height="3.5" fill="#1ba1e2"/><rect x="2" y="3.6" width="1.1" height="1.6" fill="#fff"/></svg><svg style="left:68.6px;top:5.8px" width="12" height="8" viewBox="0 0 12 8"><text x="0.2" y="6.9" font-family="Liberation Sans, sans-serif" font-size="9" font-weight="bold" fill="#388a34" stroke="#fff" stroke-width="2" letter-spacing="-0.2">C#</text><text x="0.2" y="6.9" font-family="Liberation Sans, sans-serif" font-size="9" font-weight="bold" fill="#388a34" stroke="#388a34" stroke-width="0.45" letter-spacing="-0.2">C#</text></svg><span class="tx" style="left:87px;letter-spacing:0.110px">jmcg_bisWorkflowActivity.cs</span></div>
<div class="row" style="top:308px"><svg style="left:29.0px;top:5.3px" width="6" height="9" viewBox="0 0 6 9"><path d="M0.6 1.0 L4.3 4.5 L0.6 8.0 Z" fill="#fff" stroke="#1e1e1e" stroke-width="1.1" stroke-linejoin="miter"/></svg><svg style="left:50.0px;top:4.1px" width="13" height="11" viewBox="0 0 13 11"><path d="M0 1.9 H5.9 L6.7 0 H13 V10.6 H0 Z" fill="#dcb67a"/><rect x="7.4" y="0.9" width="4.8" height="0.9" fill="#f6ecd8"/></svg><span class="tx" style="left:69px;letter-spacing:-0.233px">Xrm</span></div>
<div class="row" style="top:326px"><svg style="left:42.2px;top:7.1px" width="6" height="6" viewBox="0 0 6 6"><path d="M0.5 3 L2.2 5 L4.8 0.4" fill="none" stroke="#e51400" stroke-width="1.6"/></svg><svg style="left:50.6px;top:5.8px" width="12" height="8" viewBox="0 0 12 8"><text x="0.2" y="6.9" font-family="Liberation Sans, sans-serif" font-size="9" font-weight="bold" fill="#388a34" stroke="#fff" stroke-width="2" letter-spacing="-0.2">C#</text><text x="0.2" y="6.9" font-family="Liberation Sans, sans-serif" font-size="9" font-weight="bold" fill="#388a34" stroke="#388a34" stroke-width="0.45" letter-spacing="-0.2">C#</text></svg><span class="tx" style="left:69px;letter-spacing:-0.089px">jmcg_bisPluginRegistration.cs</span></div>
<div class="row" style="top:344px"><svg style="left:29.0px;top:5.3px" width="6" height="9" viewBox="0 0 6 9"><path d="M0.6 1.0 L4.3 4.5 L0.6 8.0 Z" fill="#fff" stroke="#1e1e1e" stroke-width="1.1" stroke-linejoin="miter"/></svg><svg style="left:41.9px;top:7.3px" width="6" height="7" viewBox="0 0 6 7"><path d="M0.85 2.9 V1.65 A1.7 1.65 0 0 1 4.25 1.65 V2.9 H3.3 V1.7 A0.75 0.75 0 0 0 1.8 1.7 V2.9 Z" fill="#1ba1e2"/><rect x="0" y="2.7" width="5.1" height="3.5" fill="#1ba1e2"/><rect x="2" y="3.6" width="1.1" height="1.6" fill="#fff"/></svg><svg style="left:50.6px;top:5.8px" width="12" height="8" viewBox="0 0 12 8"><text x="0.2" y="6.9" font-family="Liberation Sans, sans-serif" font-size="9" font-weight="bold" fill="#388a34" stroke="#fff" stroke-width="2" letter-spacing="-0.2">C#</text><text x="0.2" y="6.9" font-family="Liberation Sans, sans-serif" font-size="9" font-weight="bold" fill="#388a34" stroke="#388a34" stroke-width="0.45" letter-spacing="-0.2">C#</text></svg><span class="tx" style="left:69px;letter-spacing:-0.197px">jmcg_bisSettings.cs</span></div>
<div class="row" style="top:362px"><svg style="left:42.0px;top:7.8px" width="5" height="5" viewBox="0 0 5 5"><path d="M2.45 0 V4.9 M0 2.45 H4.9" fill="none" stroke="#388a34" stroke-width="1.4"/></svg><svg style="left:49.4px;top:4.2px" width="14" height="13" viewBox="0 0 14 13"><rect x="1.6" y="0.5" width="11.5" height="9.4" fill="#f5f5f5" stroke="#424242" stroke-width="1.1" stroke-dasharray="1.7 0.6"/><path d="M4.5 3.6 H10.5 M6.5 5.6 H10.5" stroke="#424242" stroke-width="1"/><circle cx="2.4" cy="8.2" r="1.9" fill="#fff" stroke="#424242" stroke-width="1"/><path d="M1.1 9.6 L0.4 12.6 M3.6 9.6 L4.4 12.6 M2.4 10 V11.6" fill="none" stroke="#424242" stroke-width="1"/></svg><span class="tx" style="left:69px;letter-spacing:-0.132px">JosephM.Xrm.BulkImporterSample.snk</span></div>
<div class="row" style="top:380px"><svg style="left:29.0px;top:5.3px" width="6" height="9" viewBox="0 0 6 9"><path d="M0.6 1.0 L4.3 4.5 L0.6 8.0 Z" fill="#fff" stroke="#1e1e1e" stroke-width="1.1" stroke-linejoin="miter"/></svg><svg style="left:42.2px;top:7.1px" width="6" height="6" viewBox="0 0 6 6"><path d="M0.5 3 L2.2 5 L4.8 0.4" fill="none" stroke="#e51400" stroke-width="1.6"/></svg><svg style="left:50.6px;top:5.8px" width="12" height="8" viewBox="0 0 12 8"><text x="0.2" y="6.9" font-family="Liberation Sans, sans-serif" font-size="9" font-weight="bold" fill="#388a34" stroke="#fff" stroke-width="2" letter-spacing="-0.2">C#</text><text x="0.2" y="6.9" font-family="Liberation Sans, sans-serif" font-size="9" font-weight="bold" fill="#388a34" stroke="#388a34" stroke-width="0.45" letter-spacing="-0.2">C#</text></svg><span class="tx" style="left:69px;letter-spacing:-0.429px">Schema.cs</span></div>
<div class="row" style="top:398px"><svg style="left:11.0px;top:5.3px" width="6" height="9" viewBox="0 0 6 9"><path d="M0.6 1.0 L4.3 4.5 L0.6 8.0 Z" fill="#fff" stroke="#1e1e1e" stroke-width="1.1" stroke-linejoin="miter"/></svg><svg style="left:23.9px;top:7.3px" width="6" height="7" viewBox="0 0 6 7"><path d="M0.85 2.9 V1.65 A1.7 1.65 0 0 1 4.25 1.65 V2.9 H3.3 V1.7 A0.75 0.75 0 0 0 1.8 1.7 V2.9 Z" fill="#1ba1e2"/><rect x="0" y="2.7" width="5.1" height="3.5" fill="#1ba1e2"/><rect x="2" y="3.6" width="1.1" height="1.6" fill="#fff"/></svg><svg style="left:30.6px;top:3.0px" width="15" height="13" viewBox="0 0 15 13"><path d="M1.4 0.6 H14 V11 H9.5" fill="#f5f5f5" stroke="#424242" stroke-width="1.1"/><rect x="0.9" y="0" width="13.6" height="2.2" fill="#424242"/><path d="M3.4 2.8 H7.4 M4.2 2.8 V5.8 L1 11.6 Q0.6 12.4 1.6 12.4 H9.2 Q10.2 12.4 9.8 11.6 L6.6 5.8 V2.8" fill="#fff" stroke="#388a34" stroke-width="1.1"/><path d="M2.9 8.4 H7.9 L9.8 11.8 Q10 12.4 9.2 12.4 H1.6 Q0.8 12.4 1 11.8 Z" fill="#388a34"/></svg><span class="tx" style="left:51px;letter-spacing:-0.107px">JosephM.Xrm.BulkImporterSample.Plugins.Test</span></div>
<div class="row" style="top:416px"><svg style="left:11.0px;top:5.3px" width="6" height="9" viewBox="0 0 6 9"><path d="M0.6 1.0 L4.3 4.5 L0.6 8.0 Z" fill="#fff" stroke="#1e1e1e" stroke-width="1.1" stroke-linejoin="miter"/></svg><svg style="left:24.2px;top:7.1px" width="6" height="6" viewBox="0 0 6 6"><path d="M0.5 3 L2.2 5 L4.8 0.4" fill="none" stroke="#e51400" stroke-width="1.6"/></svg><svg style="left:31.1px;top:4.2px" width="14" height="12" viewBox="0 0 14 12"><rect x="0.5" y="0.5" width="12.8" height="10.3" fill="#fff" stroke="#388a34" stroke-width="1"/><text x="1.6" y="8.8" font-family="Liberation Sans, sans-serif" font-size="8.3" fill="#424242" stroke="#424242" stroke-width="0.3">C#</text></svg><span class="tx" style="left:51px;letter-spacing:-0.200px">JosephM.Xrm.BulkImporterSample.WebResources</span></div>
  </div>
</div>
<div id="tabs"><div class="ln1"></div><div class="a"><span>Solution Explorer</span></div><div class="i"><span>Team Explorer</span></div></div>

<!-- Properties -->
<div id="pr">
  <div class="ttl"><span>Properties</span></div>
  <div class="w"></div>
  <div id="ptb">
<svg width="363" height="25" viewBox="832 685 363 25">
<rect x="834.5" y="686.5" width="22" height="21" fill="#fffcf4" stroke="#4d6082"/>
<rect x="838" y="690" width="4.4" height="4.4" fill="#2d2d2d"/><path d="M840.2 690.9 V693.5 M838.9 692.2 H841.5" stroke="#fff" stroke-width="1"/>
<rect x="838" y="698.6" width="4.4" height="4.4" fill="#2d2d2d"/><path d="M840.2 699.5 V702.1 M838.9 700.8 H841.5" stroke="#fff" stroke-width="1"/>
<path d="M844.4 690.5 H848.8 M844.4 692.5 H848.8 M844.4 694.5 H848.8 M844.4 696.5 H848.8 M844.4 699.5 H848.8 M844.4 701.5 H848.8 M844.4 703.5 H848.8" stroke="#2d2d2d" stroke-width="1"/>
<path d="M850.2 692.5 H851.8 M850.2 694.5 H851.8 M850.2 696.5 H851.8 M850.2 699.5 H851.8 M850.2 703.5 H851.8" stroke="#2d2d2d" stroke-width="1"/>
<rect x="861" y="690" width="7" height="7" fill="#2d2d2d"/>
<text x="862" y="696" font-family="Liberation Sans, sans-serif" font-size="6.5" font-weight="bold" fill="#fff">A</text>
<text x="861.4" y="704.2" font-family="Liberation Sans, sans-serif" font-size="8.4" font-weight="bold" fill="#2d2d2d">Z</text>
<path d="M872 693.4 V700.6 M869.4 698.2 L872 701.2 L874.6 698.2" fill="none" stroke="#0e4f9e" stroke-width="1.9"/>
<rect x="883" y="688" width="1" height="20" fill="#8591a7"/>
<path d="M891.2 702.4 L897.4 696.2" stroke="#9b9b9b" stroke-width="3.2" stroke-linecap="round"/>
<circle cx="899.6" cy="694" r="4.4" fill="#9b9b9b"/>
<path d="M900.3 693.3 L904.8 688.8" stroke="#cfd6e5" stroke-width="2.6"/>
</svg>

  </div>
</div>

</body>
</html>
